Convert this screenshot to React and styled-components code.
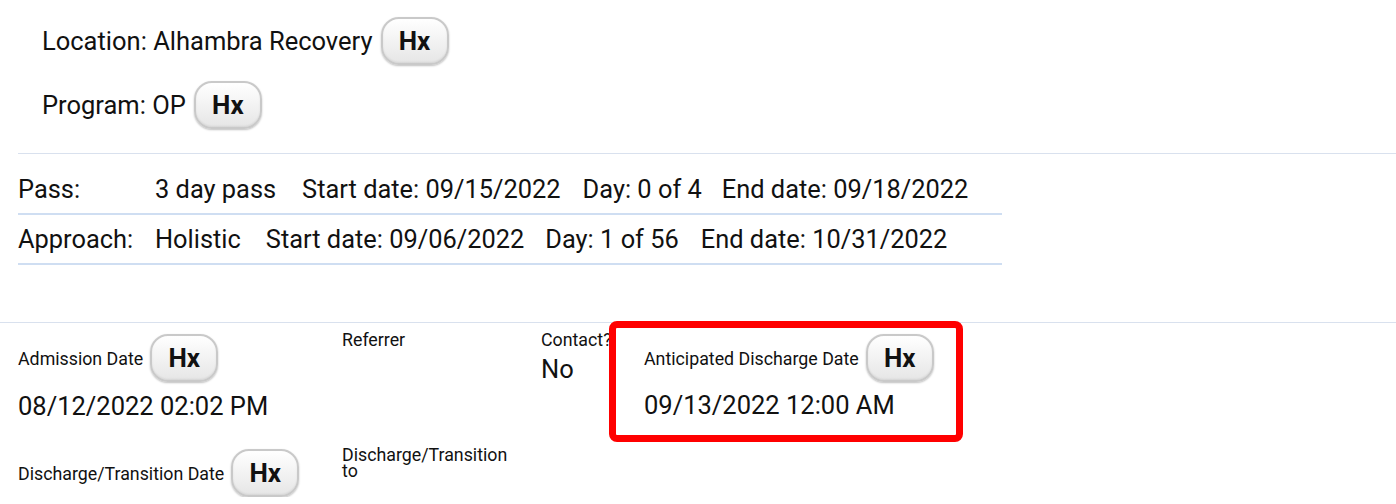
import React from "react";
import styled, { createGlobalStyle } from "styled-components";

const Global = createGlobalStyle`
  html, body { margin: 0; padding: 0; background: #fff; }
  body { font-family: Roboto, "Liberation Sans", sans-serif; color: #111; }
`;

const Page = styled.div`
  width: 1396px;
  display: flex;
  flex-direction: column;
`;

const TopInfo = styled.div`
  display: flex;
  flex-direction: column;
  gap: 16px;
  padding: 17px 0 24px 42px;
`;

const InfoRow = styled.div`
  display: flex;
  align-items: center;
  gap: 8px;
  font-size: 25.5px;
  height: 48px;
`;

const HxButton = styled.button`
  width: 68px;
  height: 48px;
  border-radius: 18px;
  border: 2px solid #c9c9c9;
  background: linear-gradient(#ffffff, #e6e6e6);
  box-shadow: inset 0 -1px 2px rgba(0,0,0,0.08), 0 1px 2px rgba(0,0,0,0.25);
  font-family: Roboto, "Liberation Sans", sans-serif;
  font-weight: 700;
  font-size: 26px;
  color: #111;
  padding: 0;
  display: flex;
  align-items: center;
  justify-content: center;
  flex: none;
`;

const Divider = styled.div`
  height: 1px;
  background: #d9e1ee;
  margin-left: ${p => p.$inset || 0}px;
`;

const Passes = styled.div`
  width: 984px;
  margin: 11px 0 0 18px;
  display: flex;
  flex-direction: column;
`;

const PassRow = styled.div`
  height: 48px;
  border-bottom: 2px solid #cfdef2;
  display: flex;
  align-items: center;
  font-size: 25.4px;
`;

const PassLabel = styled.span`
  width: 137px;
  flex: none;
`;

const PassValue = styled.span`
  margin-right: ${p => p.$gap}px;
  white-space: nowrap;
`;

const Spacer = styled.div`
  height: 57px;
`;

const Details = styled.div`
  display: grid;
  grid-template-columns: 324px 199px 68px 354px;
  grid-template-rows: 118px auto;
  padding-left: 18px;
`;

const Field = styled.div`
  display: flex;
  flex-direction: column;
  padding-top: ${p => p.$top || 0}px;
  white-space: nowrap;
`;

const LabelLine = styled.div`
  display: flex;
  align-items: center;
  gap: 7px;
  font-size: 17.8px;
  height: 48px;
`;

const PlainLabel = styled.div`
  font-size: 17.8px;
  line-height: 20px;
`;

const WrapLabel = styled.div`
  font-size: 17.8px;
  line-height: 16px;
  white-space: normal;
  width: 175px;
`;

const Value = styled.div`
  font-size: 25.5px;
  margin-top: ${p => p.$mt || 0}px;
`;

const Highlight = styled.div`
  border: 7px solid #ff0000;
  border-radius: 8px;
  padding: 6px 0 0 28px;
  height: 121px;
  box-sizing: border-box;
  display: flex;
  flex-direction: column;
  margin-top: -2px;
`;

export default function App() {
  return (
    <Page>
      <Global />
      <TopInfo>
        <InfoRow>Location: Alhambra Recovery <HxButton>Hx</HxButton></InfoRow>
        <InfoRow>Program: OP <HxButton>Hx</HxButton></InfoRow>
      </TopInfo>
      <Divider $inset={18} />
      <Passes>
        <PassRow>
          <PassLabel>Pass:</PassLabel>
          <PassValue $gap={26}>3 day pass</PassValue>
          <PassValue $gap={22}>Start date: 09/15/2022</PassValue>
          <PassValue $gap={20}>Day: 0 of 4</PassValue>
          <PassValue $gap={0}>End date: 09/18/2022</PassValue>
        </PassRow>
        <PassRow>
          <PassLabel>Approach:</PassLabel>
          <PassValue $gap={25}>Holistic</PassValue>
          <PassValue $gap={21}>Start date: 09/06/2022</PassValue>
          <PassValue $gap={22}>Day: 1 of 56</PassValue>
          <PassValue $gap={0}>End date: 10/31/2022</PassValue>
        </PassRow>
      </Passes>
      <Spacer />
      <Divider />
      <Details>
        <Field $top={11}>
          <LabelLine>Admission Date <HxButton>Hx</HxButton></LabelLine>
          <Value $mt={9}>08/12/2022 02:02 PM</Value>
        </Field>
        <Field $top={7}>
          <PlainLabel>Referrer</PlainLabel>
        </Field>
        <Field $top={7}>
          <PlainLabel>Contact?</PlainLabel>
          <Value $mt={4}>No</Value>
        </Field>
        <Highlight>
          <LabelLine>Anticipated Discharge Date <HxButton>Hx</HxButton></LabelLine>
          <Value $mt={8}>09/13/2022 12:00 AM</Value>
        </Highlight>
        <Field $top={8}>
          <LabelLine>Discharge/Transition Date <HxButton>Hx</HxButton></LabelLine>
        </Field>
        <Field $top={6}>
          <WrapLabel>Discharge/Transition to</WrapLabel>
        </Field>
      </Details>
    </Page>
  );
}
